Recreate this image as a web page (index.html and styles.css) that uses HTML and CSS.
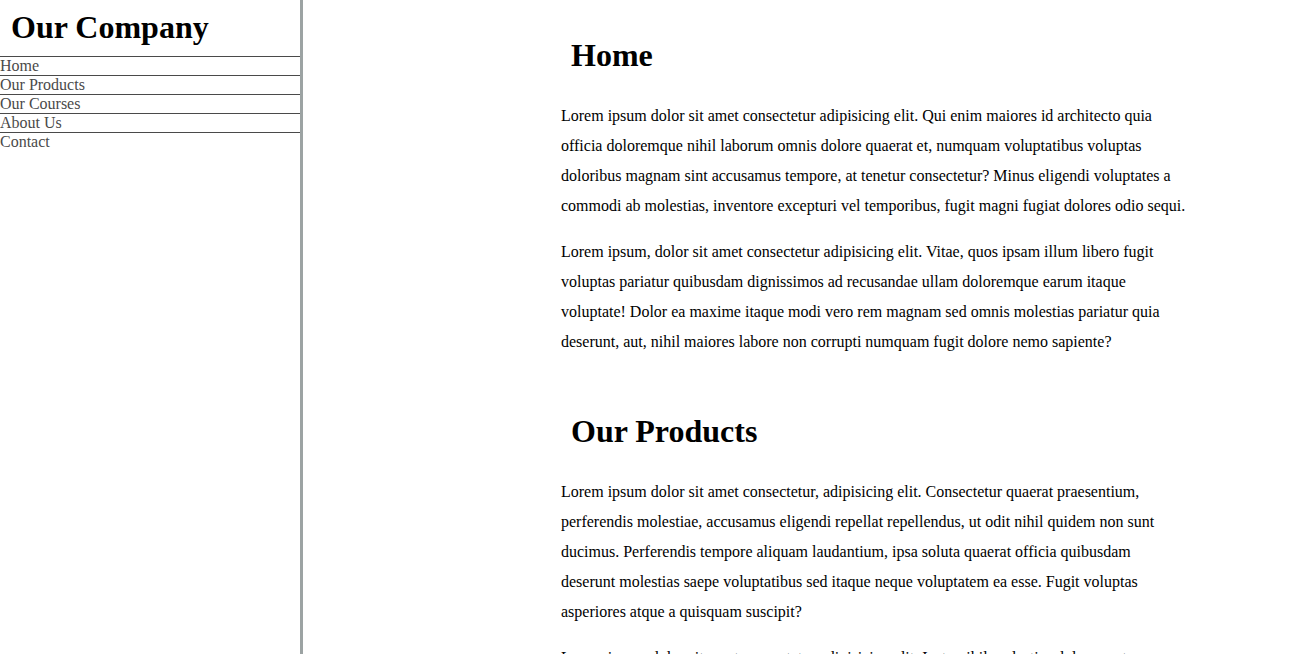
FILE: index.html
```html
<!DOCTYPE html>
<html lang="en">
<head>
<meta charset="utf-8">
<title>Our Company</title>
<link rel="stylesheet" href="styles.css">
</head>
<body>
<div class="layout">
  <aside class="sidebar">
    <h1 class="brand">Our Company</h1>
    <ul class="nav">
      <li class="nav-item">Home</li>
      <li class="nav-item">Our Products</li>
      <li class="nav-item">Our Courses</li>
      <li class="nav-item">About Us</li>
      <li class="nav-item">Contact</li>
    </ul>
  </aside>
  <main class="main">
    <section class="section">
      <h1 class="section-title">Home</h1>
      <p class="text">Lorem ipsum dolor sit amet consectetur adipisicing elit. Qui enim maiores id architecto quia officia doloremque nihil laborum omnis dolore quaerat et, numquam voluptatibus voluptas doloribus magnam sint accusamus tempore, at tenetur consectetur? Minus eligendi voluptates a commodi ab molestias, inventore excepturi vel temporibus, fugit magni fugiat dolores odio sequi.</p>
      <p class="text">Lorem ipsum, dolor sit amet consectetur adipisicing elit. Vitae, quos ipsam illum libero fugit voluptas pariatur quibusdam dignissimos ad recusandae ullam doloremque earum itaque voluptate! Dolor ea maxime itaque modi vero rem magnam sed omnis molestias pariatur quia deserunt, aut, nihil maiores labore non corrupti numquam fugit dolore nemo sapiente?</p>
    </section>
    <section class="section">
      <h1 class="section-title">Our Products</h1>
      <p class="text">Lorem ipsum dolor sit amet consectetur, adipisicing elit. Consectetur quaerat praesentium, perferendis molestiae, accusamus eligendi repellat repellendus, ut odit nihil quidem non sunt ducimus. Perferendis tempore aliquam laudantium, ipsa soluta quaerat officia quibusdam deserunt molestias saepe voluptatibus sed itaque neque voluptatem ea esse. Fugit voluptas asperiores atque a quisquam suscipit?</p>
      <p class="text">Lorem ipsum dolor sit amet consectetur adipisicing elit. Iusto nihil molestias dolorum ut, quam voluptates commodi, eaque illum harum sint perferendis aliquam sunt.</p>
    </section>
  </main>
</div>
</body>
</html>
```
FILE: styles.css
```css
html, body {
  margin: 0;
  padding: 0;
  height: 100%;
  overflow: hidden;
  background: #ffffff;
  font-family: "Liberation Serif", "Times New Roman", serif;
  font-size: 16px;
  color: #000;
}

.layout {
  display: flex;
  height: 654px;
}

.sidebar {
  width: 300px;
  flex-shrink: 0;
  border-right: 3px solid #9ca3a3;
  height: 654px;
}

.brand {
  font-size: 32px;
  font-weight: bold;
  line-height: 37px;
  margin: 9px 0 10px 11px;
}

.nav {
  list-style: none;
  margin: 0;
  padding: 0;
}

.nav-item {
  border-top: 1px solid #4a4a4a;
  line-height: 18px;
  color: #4a4a4a;
}

.main {
  flex: 1;
  padding-left: 258px;
  overflow: hidden;
}

.section {
  width: 626px;
  padding-top: 16px;
  padding-bottom: 3px;
}

.section-title {
  font-size: 32px;
  font-weight: bold;
  line-height: 37px;
  margin: 21px 0 27px 10px;
}

.text {
  line-height: 30px;
  margin: 16px 0;
}
```
